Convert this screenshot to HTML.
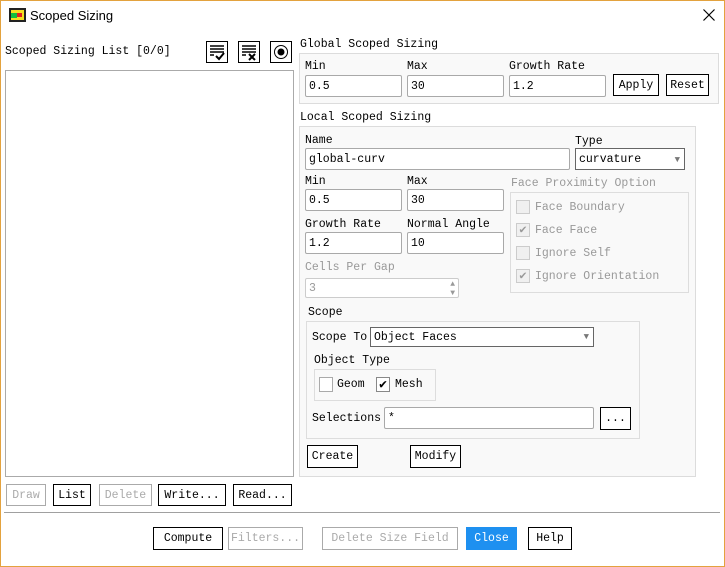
<!DOCTYPE html>
<html><head><style>
*{box-sizing:border-box;margin:0;padding:0}
body{width:725px;height:567px;background:#fff;position:relative;overflow:hidden;font-family:"Liberation Mono","Noto Sans CJK SC",monospace;font-size:11.5px;color:#000}
.a{position:absolute;white-space:nowrap;line-height:17px}
.win{position:absolute;left:0;top:0;width:725px;height:567px;border:1px solid #e3a23e}
.grp{position:absolute;background:#f9f9f9;border:1px solid #dcdcdc}
.inp{position:absolute;background:#fff;border:1px solid #a9a9a9;border-radius:2px;padding-left:3px;line-height:22px}
.btn{position:absolute;border:1px solid #000;background:#fff;text-align:center;line-height:22px}
.dis{border-color:#aaa;color:#aaa}
.g{color:#999}
.cb{position:absolute;width:14px;height:14px;border:1px solid #ccc;background:#f0f0f0;font-size:12px;line-height:12px;text-align:center;color:#999}
.cb2{position:absolute;width:14px;height:15px;border:1px solid #888;background:#fff;font-size:13px;line-height:13px;text-align:center}
</style></head><body>
<div class="win"></div>
<svg class="a" style="left:9px;top:8px" width="17" height="14"><rect width="17" height="14" fill="#222"/><rect x="2" y="2" width="13" height="10" fill="#f4e020"/><rect x="2" y="5" width="6" height="5" fill="#10c040"/><rect x="8" y="5" width="5" height="4" fill="#e02020"/></svg>
<div class="a" style="left:30px;top:7px;font-family:'Liberation Sans',sans-serif;font-size:13px">Scoped Sizing</div>
<svg class="a" style="left:703px;top:9px" width="12" height="12" stroke="#000" stroke-width="1.2"><path d="M0.5 0.5L11.5 11.5M11.5 0.5L0.5 11.5"/></svg>

<div class="a" style="left:5px;top:43px">Scoped Sizing List [0/0]</div>
<svg class="a" style="left:206px;top:41px" width="88" height="22" fill="none" stroke="#000">
<rect x="0.5" y="0.5" width="21" height="21"/><path d="M4 5h14M4 8h14M4 11h14M4 14h4" stroke-width="1.5"/><path d="M10 15l3 3 5-6" stroke-width="2"/>
<rect x="32.5" y="0.5" width="21" height="21"/><path d="M36 5h14M36 8h14M36 11h14M36 14h4" stroke-width="1.5"/><path d="M43 13l6 6M49 13l-6 6" stroke-width="2"/>
<rect x="64.5" y="0.5" width="21" height="21"/><circle cx="75" cy="11" r="6.5"/><circle cx="75" cy="11" r="3" fill="#000"/>
</svg>
<div class="a" style="left:5px;top:70px;width:289px;height:407px;border:1px solid #aaa"></div>

<div class="a" style="left:300px;top:36px">Global Scoped Sizing</div>
<div class="grp" style="left:299px;top:53px;width:420px;height:51px"></div>
<div class="a" style="left:305px;top:58px">Min</div>
<div class="a" style="left:407px;top:58px">Max</div>
<div class="a" style="left:509px;top:58px">Growth Rate</div>
<div class="inp" style="left:305px;top:75px;width:97px;height:22px">0.5</div>
<div class="inp" style="left:407px;top:75px;width:97px;height:22px">30</div>
<div class="inp" style="left:509px;top:75px;width:97px;height:22px">1.2</div>
<div class="btn" style="left:613px;top:74px;width:46px;height:22px">Apply</div>
<div class="btn" style="left:666px;top:74px;width:43px;height:22px">Reset</div>

<div class="a" style="left:300px;top:109px">Local Scoped Sizing</div>
<div class="grp" style="left:299px;top:126px;width:397px;height:351px"></div>
<div class="a" style="left:305px;top:132px">Name</div>
<div class="a" style="left:575px;top:133px">Type</div>
<div class="inp" style="left:305px;top:148px;width:265px;height:22px">global-curv</div>
<div class="inp" style="left:575px;top:148px;width:110px;height:22px;border-radius:0;border-color:#666">curvature<span style="position:absolute;right:4px;top:0;color:#777;font-size:9px">▼</span></div>
<div class="a" style="left:305px;top:173px">Min</div>
<div class="a" style="left:407px;top:173px">Max</div>
<div class="inp" style="left:305px;top:189px;width:97px;height:22px">0.5</div>
<div class="inp" style="left:407px;top:189px;width:97px;height:22px">30</div>
<div class="a" style="left:305px;top:216px">Growth Rate</div>
<div class="a" style="left:407px;top:216px">Normal Angle</div>
<div class="inp" style="left:305px;top:232px;width:97px;height:22px">1.2</div>
<div class="inp" style="left:407px;top:232px;width:97px;height:22px">10</div>
<div class="a g" style="left:305px;top:259px">Cells Per Gap</div>
<div class="inp g" style="left:305px;top:278px;width:154px;height:20px;line-height:19px;border-color:#ccc">3<span style="position:absolute;right:3px;top:1px;font-size:8px;line-height:9px">▲<br>▼</span></div>

<div class="a g" style="left:511px;top:175px">Face Proximity Option</div>
<div class="a" style="left:510px;top:192px;width:179px;height:101px;border:1px solid #ddd"></div>
<div class="cb" style="left:516px;top:200px"></div><div class="a g" style="left:535px;top:199px">Face Boundary</div>
<div class="cb" style="left:516px;top:223px">✔</div><div class="a g" style="left:535px;top:222px">Face Face</div>
<div class="cb" style="left:516px;top:246px"></div><div class="a g" style="left:535px;top:245px">Ignore Self</div>
<div class="cb" style="left:516px;top:269px">✔</div><div class="a g" style="left:535px;top:268px">Ignore Orientation</div>

<div class="a" style="left:308px;top:304px">Scope</div>
<div class="a" style="left:306px;top:321px;width:334px;height:118px;border:1px solid #ddd"></div>
<div class="a" style="left:312px;top:329px">Scope To</div>
<div class="inp" style="left:370px;top:327px;width:224px;height:20px;line-height:19px;border-radius:0;border-color:#666">Object Faces<span style="position:absolute;right:4px;top:0;color:#777;font-size:9px">▼</span></div>
<div class="a" style="left:314px;top:352px">Object Type</div>
<div class="a" style="left:314px;top:369px;width:122px;height:32px;border:1px solid #ddd"></div>
<div class="cb2" style="left:319px;top:377px;border-color:#aaa"></div><div class="a" style="left:337px;top:376px">Geom</div>
<div class="cb2" style="left:376px;top:377px">✔</div><div class="a" style="left:395px;top:376px">Mesh</div>
<div class="a" style="left:312px;top:410px">Selections</div>
<div class="inp" style="left:384px;top:407px;width:210px;height:22px">*</div>
<div class="btn" style="left:600px;top:407px;width:31px;height:23px">...</div>
<div class="btn" style="left:307px;top:445px;width:51px;height:23px">Create</div>
<div class="btn" style="left:410px;top:445px;width:51px;height:23px">Modify</div>

<div class="btn dis" style="left:6px;top:484px;width:40px;height:22px">Draw</div>
<div class="btn" style="left:53px;top:484px;width:38px;height:22px">List</div>
<div class="btn dis" style="left:99px;top:484px;width:53px;height:22px">Delete</div>
<div class="btn" style="left:158px;top:484px;width:68px;height:22px">Write...</div>
<div class="btn" style="left:233px;top:484px;width:59px;height:22px">Read...</div>
<div class="a" style="left:4px;top:512px;width:716px;height:1px;background:#a0a0a0"></div>
<div class="btn" style="left:153px;top:527px;width:70px;height:23px">Compute</div>
<div class="btn dis" style="left:228px;top:527px;width:75px;height:23px">Filters...</div>
<div class="btn dis" style="left:322px;top:527px;width:136px;height:23px">Delete Size Field</div>
<div class="btn" style="left:466px;top:527px;width:51px;height:23px;background:#1e90f0;border-color:#1e90f0;color:#fff">Close</div>
<div class="btn" style="left:528px;top:527px;width:44px;height:23px">Help</div>
</body></html>
